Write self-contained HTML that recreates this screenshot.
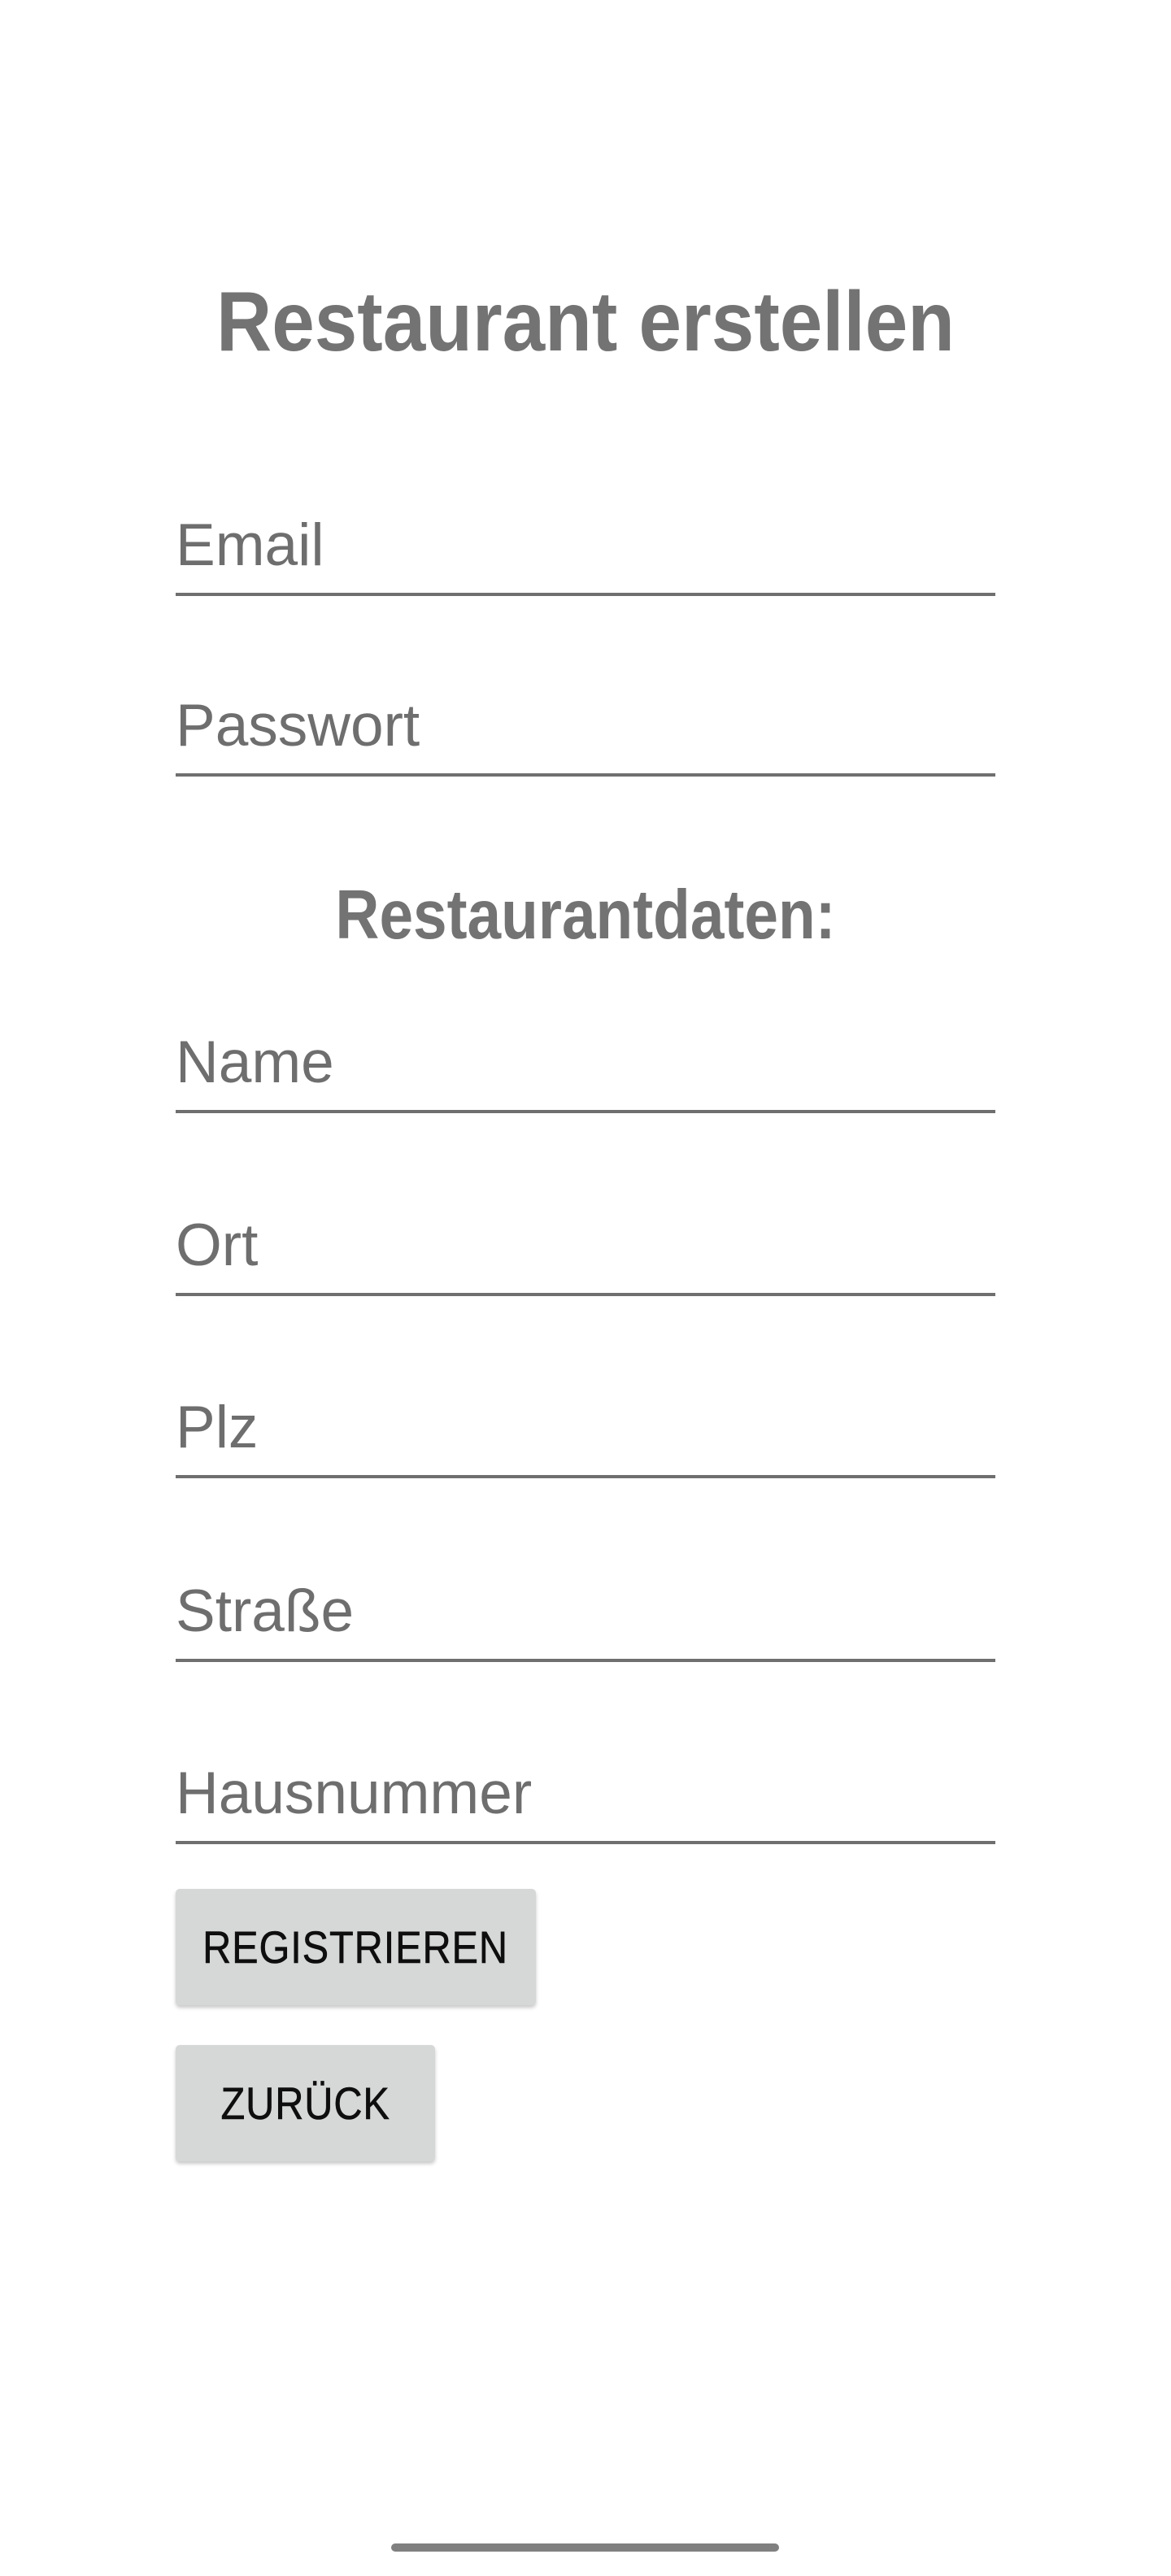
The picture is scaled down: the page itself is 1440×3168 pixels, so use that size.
<!DOCTYPE html>
<html><head><meta charset="utf-8">
<style>
html,body{margin:0;padding:0;background:#fff;}
body{width:1440px;height:3168px;position:relative;overflow:hidden;font-family:"Liberation Sans",Arial,sans-serif;}
.t{position:absolute;white-space:nowrap;}
.title{left:0;width:1440px;text-align:center;top:344px;font-size:104px;line-height:104px;font-weight:bold;color:#737373;transform:scaleX(0.908);transform-origin:720px 0;}
.sub{left:0;width:1440px;text-align:center;top:1083px;font-size:85px;line-height:85px;font-weight:bold;color:#737373;transform:scaleX(0.88);transform-origin:720px 0;}
.f{left:216px;font-size:73px;line-height:73px;color:#6e6e6e;}
.ln{position:absolute;left:216px;width:1008px;height:4px;background:#6f6f6f;}
.btn{position:absolute;left:216px;background:#d6d7d7;border-radius:5px;box-shadow:0 3px 5px rgba(0,0,0,0.22);display:flex;align-items:center;justify-content:center;}
.btn span{font-size:56px;color:#0e0e0e;font-weight:500;display:inline-block;transform:scaleX(0.87);letter-spacing:1px;-webkit-text-stroke:0.6px #0e0e0e;}
.home{position:absolute;left:481px;top:3128px;width:477px;height:10px;border-radius:5px;background:#808080;}
</style></head><body>
<div class="t title">Restaurant erstellen</div>

<div class="t f" style="top:634px">Email</div><div class="ln" style="top:729px"></div>
<div class="t f" style="top:856px">Passwort</div><div class="ln" style="top:951px"></div>

<div class="t sub">Restaurantdaten:</div>

<div class="t f" style="top:1270px">Name</div><div class="ln" style="top:1365px"></div>
<div class="t f" style="top:1495px">Ort</div><div class="ln" style="top:1590px"></div>
<div class="t f" style="top:1719px">Plz</div><div class="ln" style="top:1814px"></div>
<div class="t f" style="top:1945px">Straße</div><div class="ln" style="top:2040px"></div>
<div class="t f" style="top:2169px">Hausnummer</div><div class="ln" style="top:2264px"></div>

<div class="btn" style="top:2323px;width:443px;height:143px"><span>REGISTRIEREN</span></div>
<div class="btn" style="top:2515px;width:319px;height:143px"><span>ZURÜCK</span></div>

<div class="home"></div>
</body></html>
